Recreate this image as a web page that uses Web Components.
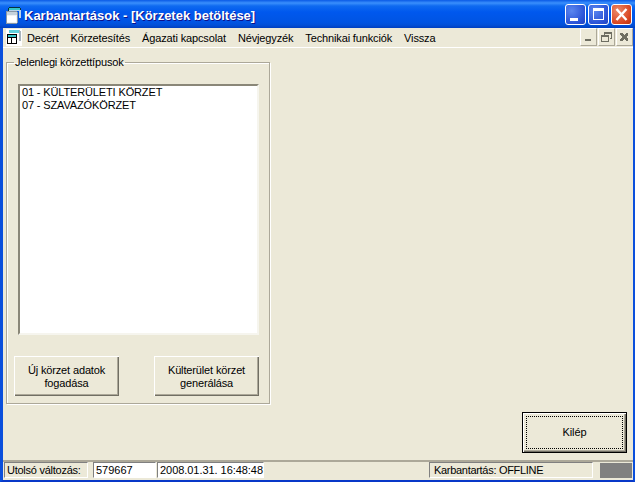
<!DOCTYPE html>
<html>
<head>
<meta charset="utf-8">
<style>
  html,body{ margin:0; height:100%; background:#ece9d8; overflow:hidden; }
  body{ font-family:"Liberation Sans",Arial,sans-serif; font-size:11px; color:#000; letter-spacing:-.14px; }
</style>
</head>
<body>
<xp-window title="Karbantartások - [Körzetek betöltése]">
  <mdi-menu>
    <span>Decért</span><span>Körzetesítés</span><span>Ágazati kapcsolat</span><span>Névjegyzék</span><span>Technikai funkciók</span><span>Vissza</span>
  </mdi-menu>
  <main-area>
    <group-box slot="left" label="Jelenlegi körzettípusok">
      <list-box>
        <div>01 - KÜLTERÜLETI KÖRZET</div>
        <div>07 - SZAVAZÓKÖRZET</div>
      </list-box>
      <div slot="actions" style="display:flex;justify-content:space-between">
        <xp-button>Új körzet adatok<br>fogadása</xp-button>
        <xp-button>Külterület körzet<br>generálása</xp-button>
      </div>
    </group-box>
    <xp-button slot="exit" focused>Kilép</xp-button>
  </main-area>
  <status-bar>
    <status-cell style="width:84px;margin-right:5px;letter-spacing:-.25px" kind="label">Utolsó változás:</status-cell>
    <status-cell style="width:63px;margin-right:1px;letter-spacing:0" kind="white">579667</status-cell>
    <status-cell style="width:107px;letter-spacing:-.05px" kind="white">2008.01.31. 16:48:48</status-cell>
    <div style="flex:1"></div>
    <status-cell style="width:164px;letter-spacing:-.3px;padding-left:4px" kind="label">Karbantartás: OFFLINE</status-cell>
    <div style="width:32px;height:15px;background:#808080;margin:1px 1px 0 7px"></div>
  </status-bar>
</xp-window>

<script>
// caption icon: white window in front of a teal one
const capIcon = `
  <svg width="16" height="17" viewBox="0 0 16 17" shape-rendering="crispEdges">
    <path d="M3 0h11v2h1v9h-2V4H3z" fill="#b9d4ec"/>
    <path d="M3 0h11v3H3z" fill="#35c4c8"/>
    <path d="M3 0h11v1H3zM2 1h1v3H2zM14 1h1v2h-1z" fill="#06323c"/>
    <path d="M0 5h11v11H0z" fill="#eef1f4"/>
    <path d="M0 5h11v3H0z" fill="#c6d2dc"/>
    <path d="M1 9h9v6H1z" fill="#fff"/>
    <path d="M0 4h11v1H0zM0 5h1v11H0zM0 16h11v1H0zM11 5h1v11h-1z" fill="#8a97a6"/>
  </svg>`

// the same icon as the menu strip draws it, on a white tile with black outlines
const menuIcon = `
  <svg width="16" height="17" viewBox="0 0 16 17" shape-rendering="crispEdges">
    <rect width="16" height="17" fill="#fff"/>
    <path d="M3 1h11v1h1v10h-2V4H3z" fill="#a8b4bc"/>
    <path d="M3 1h10v3H3z" fill="#5fd0dc"/>
    <path d="M1 5h10v10H1z" fill="#fff"/>
    <path d="M2 6h8v2H2z" fill="#35c4c8"/>
    <path d="M1 5h10v1H2v2h8V6h1v9H1zM2 9v5h3V9zM6 9v5h4V9z" fill="#000" fill-rule="evenodd"/>
  </svg>`

class XpWindow extends HTMLElement{
  constructor(){
    super()
    this.attachShadow({mode:'open'}).innerHTML = `
      <style>
        :host{ display:flex; flex-direction:column; width:635px; height:482px; box-sizing:border-box;
          background:#ece9d8; border:solid #0a4fdc; border-width:0 2px 2px 3px; border-bottom-color:#0838c8; }
        .cap{ height:28px; margin:0 -2px 0 -3px; padding:1px 3px 0 6px; box-sizing:border-box; display:flex; align-items:center; flex:none;
          background:linear-gradient(180deg,#0a5ae6 0,#3a8ffc 3px,#0f6af0 6px,#0058ee 12px,#0054e3 22px,#0250d8 25px,#003fc0 28px); }
        .ico{ width:16px; height:17px; margin:2px 2px 0 0; }
        .t{ flex:1; color:#fff; font:bold 13px "Liberation Sans",Arial,sans-serif; letter-spacing:0; text-shadow:1px 1px #0f1089; white-space:nowrap; padding-top:1px; }
        .b{ width:21px; height:21px; box-sizing:border-box; margin-left:2px; border:1px solid #fff; border-radius:3px;
          background:radial-gradient(circle at 30% 30%,#5a86ef,#2a52d6 70%,#2144c0); display:block; }
        .b.x{ background:radial-gradient(circle at 30% 30%,#ec8a6a,#d9441e 70%,#b8320f); }
        .b svg{ display:block; }
      </style>
      <div class="cap">
        <div class="ico">${capIcon}</div>
        <div class="t">${this.getAttribute('title')}</div>
        <div class="b"><svg width="19" height="19" shape-rendering="crispEdges"><path d="M4 13h8v3H4z" fill="#fff"/></svg></div>
        <div class="b"><svg width="19" height="19" shape-rendering="crispEdges"><path d="M4 3h11v12H4zM5 6v8h9V6z" fill="#fff" fill-rule="evenodd"/></svg></div>
        <div class="b x"><svg width="19" height="19"><path d="M4.5 4l10 11M14.5 4l-10 11" stroke="#fff" stroke-width="2.4"/></svg></div>
      </div>
      <slot></slot>`
    this.removeAttribute('title')
  }
}
customElements.define('xp-window', XpWindow)

class MdiMenu extends HTMLElement{
  constructor(){
    super()
    this.attachShadow({mode:'open'}).innerHTML = `
      <style>
        :host{ display:flex; align-items:center; flex:none; height:19px; border-bottom:1px solid #fff; }
        .ico{ width:16px; height:17px; margin:0 -1px 0 3px; }
        .items{ display:flex; flex:1; }
        ::slotted(span){ margin:0 6px; }
        .c{ display:flex; gap:1px; align-self:flex-start; }
        .c div{ width:17px; height:18px; box-sizing:border-box; border:1px solid; border-color:#fff #aca899 #aca899 #fff; }
        .c svg{ display:block; }
      </style>
      <div class="ico">${menuIcon}</div>
      <div class="items"><slot></slot></div>
      <div class="c">
        <div><svg width="15" height="16" shape-rendering="crispEdges"><path d="M4 10h6v2H4z" fill="#6e6e62"/></svg></div>
        <div><svg width="15" height="16" shape-rendering="crispEdges"><path d="M5 3h8v7h-2V9h1V5H6v1H5zM2 6h8v7H2zM3 8v4h6V8z" fill="#6e6e62" fill-rule="evenodd"/></svg></div>
        <div><svg width="15" height="16" shape-rendering="crispEdges"><path d="M3 4h2l2 2 2-2h2v2L9 8l2 2v2H9L7 10l-2 2H3v-2l2-2-2-2z" fill="#6e6e62"/></svg></div>
      </div>`
  }
}
customElements.define('mdi-menu', MdiMenu)

class MainArea extends HTMLElement{
  constructor(){
    super()
    this.attachShadow({mode:'open'}).innerHTML = `
      <style>
        :host{ display:flex; flex:1; flex-direction:column; min-height:0; padding:8px 6px 0 3px; }
        .exit{ margin-top:auto; margin-bottom:7px; align-self:flex-end; }
      </style>
      <slot name="left"></slot>
      <div class="exit"><slot name="exit"></slot></div>`
  }
}
customElements.define('main-area', MainArea)

class GroupBox extends HTMLElement{
  constructor(){
    super()
    this.attachShadow({mode:'open'}).innerHTML = `
      <style>
        :host{ display:block; width:264px; box-sizing:border-box; }
        fieldset{ margin:0; padding:15px 10px 8px 11px; height:348px; box-sizing:border-box; display:flex; flex-direction:column;
          border:1px solid #aca899; box-shadow:inset 1px 1px #fff,1px 1px #fff; }
        legend{ padding:0 1px; margin-left:-4px; line-height:13px; }
        .a{ margin-top:21px; margin-left:-4px; flex:none; }
      </style>
      <fieldset>
        <legend>${this.getAttribute('label')}</legend>
        <slot></slot>
        <div class="a"><slot name="actions"></slot></div>
      </fieldset>`
  }
}
customElements.define('group-box', GroupBox)

class ListBox extends HTMLElement{
  constructor(){
    super()
    this.attachShadow({mode:'open'}).innerHTML = `
      <style>
        :host{ display:block; flex:none; height:251px; box-sizing:border-box; background:#fff; padding:0 2px;
          border:2px solid; border-color:#8a8778 #f6f5ee #f6f5ee #8a8778; line-height:13px; }
      </style>
      <slot></slot>`
  }
}
customElements.define('list-box', ListBox)

class XpButton extends HTMLElement{
  constructor(){
    super()
    const focused = this.hasAttribute('focused')
    this.attachShadow({mode:'open'}).innerHTML = `
      <style>
        :host{ display:block; width:105px; height:${focused ? 41 : 40}px; box-sizing:border-box; background:#ece9d8;
          ${focused
            ? 'border:1px solid #000; box-shadow:inset 1px 1px #fff,inset -1px -1px #716f64,inset -2px -2px #aca899;'
            : 'box-shadow:inset 1px 1px #fff,inset -1px -1px #716f64,inset -2px -2px #aca899;'}
          text-align:center; line-height:13px; }
        :host([focused]){ position:relative; }
        .f{ height:100%; box-sizing:border-box; display:flex; align-items:center; justify-content:center; padding-top:1px; }
        .f.on{ border:1px dotted #000; height:auto; position:absolute; inset:3px; padding-top:0; }
      </style>
      <div class="f ${focused ? 'on' : ''}"><div><slot></slot></div></div>`
  }
}
customElements.define('xp-button', XpButton)

class StatusBar extends HTMLElement{
  constructor(){
    super()
    this.attachShadow({mode:'open'}).innerHTML = `
      <style>
        :host{ display:flex; align-items:flex-start; flex:none; height:18px; padding:0 0 0 1px;
          border-top:2px solid #aca899; }
      </style>
      <slot></slot>`
  }
}
customElements.define('status-bar', StatusBar)

class StatusCell extends HTMLElement{
  constructor(){
    super()
    const white = this.getAttribute('kind') === 'white'
    this.attachShadow({mode:'open'}).innerHTML = `
      <style>
        :host{ display:block; flex:none; height:16px; box-sizing:border-box; padding:1px 0 0 2px; line-height:13px; white-space:nowrap;
          background:${white ? '#fff' : '#ece9d8'};
          border:1px solid; border-color:#808080 #fff #fff #808080; }
      </style>
      <slot></slot>`
  }
}
customElements.define('status-cell', StatusCell)
</script>
</body>
</html>
